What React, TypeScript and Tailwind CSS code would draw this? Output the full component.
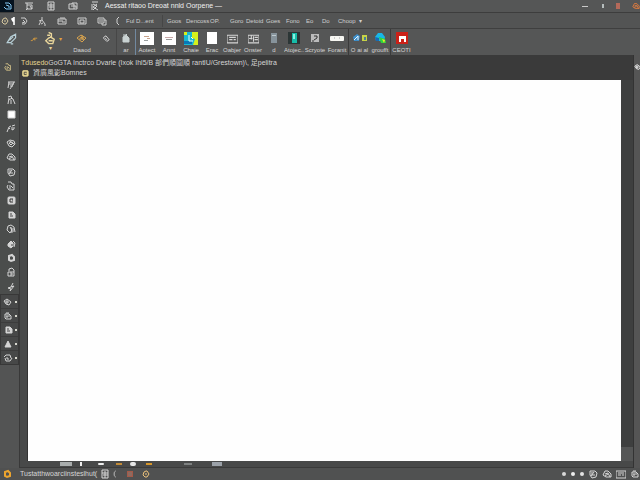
import type { ReactNode } from "react";

/**
 * Desktop image editor: title bar, menu, tool ribbon, document tab,
 * tool palette on the left, blank canvas and a status bar.
 */

const GLYPHS: Record<string, ReactNode> = {
  logo: <path d="M3 2h4l2 2v4H4L2 6M4 4l3 1v2" />,
  frame: <path d="M1 2h8M3 2v6h5V4H3M2 9l2-2M6 5l2 3" />,
  grid: <path d="M2 1v8h6V1zM2 4h6M5 2v7M3 6h5" />,
  card: <path d="M1 3h5v5H1zM4 3V2h5v6H6M3 5h5M7 6h2" />,
  scissors: <path d="M2 1h6M3 3l4 2-4 4M7 3L3 6l5 3M2 3v6" />,
  ring: <path d="M5 2L3 3 2 6l2 2h2l2-3-2-3zM4 5h2" />,
  flag: <path d="M5 1v8M5 2L3 3l1 2h1" strokeWidth="1.6" />,
  rotate: <path d="M2 2h4l2 3-2 3H3M4 4l2 2-3 1" />,
  person: <path d="M5 1v3M2 5l3-1 3 4M4 5L2 9M6 7L4 8M7 9h2" />,
  window: <path d="M1 3h8v5H1zM1 5h5M5 6h3M3 2h5" />,
  folder: <path d="M1 2h8v6H1zM3 4h4v3H3z" />,
  chat: <path d="M1 2h6v5H1zM7 4h2v5H5V7M3 3v3M5 3v3" />,
  paren: <path d="M6 1L4 3v4l2 2" />,
  pen: <path d="M1 8l3-5 4-2v3L4 8H1zM3 6l3-3M4 9h2" />,
  wave: <path d="M1 7h2l2-3h4M5 4v2h2" />,
  key: <path d="M4 1l2 1v2L4 5 2 7l2 2h3l1-3-3-2M3 3h2M4 7h3" />,
  diamond: <path d="M0 5l4-3 5 3-4 4zM3 5l3-1v3M5 2v4M2 6h5" />,
  eraser: <path d="M2 3l3-2 4 5-3 2-4-4zM4 4l2 2" />,
  bag: (
    <>
      <path d="M2 9V4l3-2 3 3v4z" fill="currentColor" />
      <path d="M2 2h3l1-1M4 4h3" />
    </>
  ),
  panel: <path d="M0 2h10v7H0zM2 4h6M2 6h3M6 6h2" />,
  table: <path d="M0 2h10v7H0zM3 2v4M1 5h3M6 4h3M6 6h3M5 3v5" />,
  note: (
    <>
      <path d="M1 1h8v8H1z" fill="#bbb" stroke="none" />
      <path d="M4 3h3v2L4 7M2 8h2" stroke="#333" />
    </>
  ),
  crop: <path d="M2 2h7M3 4h5M3 2L2 8M8 2L6 6l-2 3M4 6h3" />,
  lasso: <path d="M2 2l3-1 1 3M3 3L2 9M5 3l2 1 2 5M5 5v4M3 5l3-2" />,
  square: <path d="M2 2h7v7H2z" fill="#fff" />,
  brush: <path d="M1 9l2-5 2-1M3 5l1 1M6 3l3-1M6 4v3l2-1V4" />,
  eye: <path d="M1 4l3-2 4 1 1 3-3 3-3-1-2-4zM3 4l4 1-2 2-2-2M4 3l4 3" />,
  heal: <path d="M1 6l2-4h3l3 3v3H4L1 6zM3 5l3-1 2 4M3 7l3-2" />,
  clock: <path d="M2 2h5l2 2-1 4-4 1-2-3V2zM4 3v3h3M6 3L3 7" />,
  stamp: <path d="M2 1h3l1 2h2v6H3L1 6l1-2M4 4v4M5 5l2 2" />,
  box: (
    <>
      <rect x="2" y="2" width="7" height="7" rx="1" fill="currentColor" />
      <path d="M4 4h3M4 4v3h3M6 5h1" stroke="#333" />
    </>
  ),
  page: (
    <>
      <path d="M3 2h4l2 2v4H3z" fill="currentColor" />
      <path d="M4 4h2M4 6h3" stroke="#444" />
    </>
  ),
  drop: (
    <>
      <path d="M2 5l3-3 2 2v3L5 9 2 7z" fill="currentColor" />
      <path d="M7 2l2 2-1 4" />
      <path d="M6 5v2" stroke="#444" />
    </>
  ),
  donut: <path d="M3 3l3-1 2 2v3L5 8 3 7z" strokeWidth="2" />,
  fan: <path d="M2 2l3-1 3 2 1 5M2 2L1 6l3 3 2-3-2-3M5 3l1 6M7 4v4" />,
  lock: <path d="M3 4V2l3-1 2 2v6H2V5h6M4 6h2v2H4" />,
  nib: <path d="M7 1L5 5 2 6l3 1-1 2 4-5-3 1" />,
  hand: <path d="M1 4l3-2 4 3-2 3-3-1zM3 4h2v2H3z" />,
  cube: <path d="M2 3h4l2 2v3H3L2 7zM3 5h4M4 5v2M3 2h3" />,
  cone: <path d="M2 8l3-6 3 6zM5 3v5M6 5v3" fill="currentColor" />,
  cycle: <path d="M1 4l2-2h4l1 3M9 5L7 8H3L2 5M4 4v2h2" />,
};

function Glyph({ name, className = "size-2.5" }: { name: string; className?: string }) {
  return (
    <svg
      viewBox="0 0 10 10"
      fill="none"
      stroke="currentColor"
      strokeWidth="1"
      aria-hidden="true"
      className={`shrink-0 ${className}`}
    >
      {GLYPHS[name]}
    </svg>
  );
}

function IconButton({ name, label, className }: { name: string; label: string; className?: string }) {
  return (
    <button aria-label={label} className={`flex shrink-0 items-center justify-center ${className ?? ""}`}>
      <Glyph name={name} />
    </button>
  );
}

const QUICK = ["frame", "grid", "card", "scissors"];

const MENU_ICONS = [
  { name: "ring", cls: "w-2.5 text-[#d8c9a0]" },
  { name: "flag", cls: "w-2 text-white" },
  { name: "rotate", cls: "w-3" },
  { name: "person", cls: "w-6" },
  { name: "window", cls: "w-4" },
  { name: "folder", cls: "w-6" },
  { name: "chat", cls: "w-4" },
  { name: "paren", cls: "w-4" },
];

const MENUS = [
  { label: "Ful D...ent", cls: "w-9" },
  { label: "Goos", cls: "w-6 border-l border-[#464646] pl-1" },
  { label: "Dencoss", cls: "w-6" },
  { label: "OP.", cls: "w-5" },
  { label: "Goro", cls: "w-4" },
  { label: "Detoid", cls: "w-5" },
  { label: "Goes", cls: "w-5" },
  { label: "Fono", cls: "w-5" },
  { label: "Eo", cls: "w-4" },
  { label: "Do", cls: "w-4" },
  { label: "Choop  ▾", cls: "w-8" },
];

const RIBBON: { label: string; icon: ReactNode; cls: string }[] = [
  {
    label: "Aotect",
    cls: "w-[22px]",
    icon: (
      <svg viewBox="0 0 14 13" className="h-[13px] w-3.5">
        <path fill="#fff" d="M0 0h14v13H0z" />
        <path stroke="#c9a48c" d="M4 4.500h5M7 6.500h3" />
        <path stroke="#9aa0a0" d="M4 8.500h4" />
      </svg>
    ),
  },
  {
    label: "Annt",
    cls: "w-[22px]",
    icon: (
      <svg viewBox="0 0 14 13" className="h-[13px] w-3.5">
        <path fill="#fff" d="M0 0h14v13H0z" />
        <path stroke="#c8a8a8" d="M3 5.500h8" />
        <path stroke="#999" d="M4 7.500h6" />
      </svg>
    ),
  },
  {
    label: "Chaie",
    cls: "w-[22px]",
    icon: (
      <svg viewBox="0 0 14 13" className="h-[13px] w-3.5">
        <path fill="#17b9d4" d="M0 0h14v13H0z" />
        <path fill="#d6f01c" d="M8 0h6v13H9l2-6-3-1zM0 0h3v3H0z" />
        <path fill="#0878b8" d="M0 9h8v3H0z" />
        <path fill="none" stroke="#eaffff" d="M5 3v6h4M7 5l2 2" />
      </svg>
    ),
  },
  { label: "Erac", cls: "w-5", icon: <span className="h-3 w-2.5 bg-white" /> },
  { label: "Oabjer", cls: "w-5", icon: <Glyph name="panel" className="size-[11px]" /> },
  { label: "Onster", cls: "w-[22px]", icon: <Glyph name="table" className="size-[11px]" /> },
  {
    label: "d",
    cls: "w-5",
    icon: (
      <svg viewBox="0 0 6 10" className="h-2.5 w-1.5">
        <path fill="#87939b" d="M0 0h6v10H0z" />
        <path stroke="#bdc8cd" d="M1 2.500h4" />
      </svg>
    ),
  },
  {
    label: "Atojec..",
    cls: "w-5",
    icon: (
      <svg viewBox="0 0 12 12" className="size-3">
        <path fill="#2c3636" d="M0 0h12v12H0z" />
        <path fill="#16bca9" d="M4 1h5v10H4z" />
        <path fill="#8af0df" d="M5 2h2v5H5z" />
      </svg>
    ),
  },
  { label: "Scryote", cls: "w-[22px]", icon: <Glyph name="note" /> },
  {
    label: "Foranit",
    cls: "w-[22px]",
    icon: (
      <svg viewBox="0 0 14 6" className="h-1.5 w-3.5">
        <rect width="14" height="5" y="1" rx="1" fill="#f6f6f2" />
        <path stroke="#ccc" d="M4.500 2v2M9.500 2v2" />
      </svg>
    ),
  },
  {
    label: "O ai al",
    cls: "w-[22px] border-l border-[#3b3b3b]",
    icon: (
      <svg viewBox="0 0 14 8" className="h-2 w-3.5">
        <path fill="#3e8ec8" d="M0 3l4-3 3 2-1 5H1z" />
        <path fill="none" stroke="#e3f3ff" d="M1 6l4-4v4" />
        <path fill="#c7d246" d="M9 1h5v6H9z" />
        <path fill="#477f9a" d="M11 3h2v3h-2z" />
      </svg>
    ),
  },
  {
    label: "groufft",
    cls: "w-5",
    icon: (
      <svg viewBox="0 0 12 12" className="size-3">
        <path fill="#17b7e8" d="M1 5l3-4h4l3 4-1 4H2z" />
        <path fill="#2fd53c" d="M5 5l6 2 1 4H7z" />
        <path fill="#e8ec27" d="M8 7l3 1-1 3z" />
        <path fill="#1769b3" d="M1 5l4 1v3H2z" />
      </svg>
    ),
  },
  {
    label: "CEOTI",
    cls: "w-[22px] border-l border-[#3b3b3b]",
    icon: (
      <svg viewBox="0 0 12 12" className="size-3">
        <path fill="#ca2118" d="M0 0h12v12H0z" />
        <path fill="#fff" d="M3 4h7v6H8V7H5v3H3z" />
      </svg>
    ),
  },
];

const TOOLS = [
  "crop", "lasso", "square", "brush", "eye", "heal", "clock", "stamp",
  "box", "page", "fan", "drop", "donut", "lock", "nib",
];
const LAYER_TOOLS = ["hand", "cube", "page", "cone", "cycle"];

function TitleBar() {
  return (
    <header className="flex h-[13px] items-center border-b border-[#3d3d3d] bg-[#555656]">
      <span className="mr-2.5 flex h-3 w-3.5 items-center justify-center bg-[#06131f] text-[#83c9f5]">
        <Glyph name="logo" />
      </span>
      <div className="flex w-[81px] gap-3 text-[#d2d2d2]">
        {QUICK.map((name) => (
          <IconButton key={name} name={name} label={name} />
        ))}
      </div>
      <h1 className="text-[7px] leading-3 text-[#f0f0f0]">Aessat ritaoo Dreoat nnld Oorpene —</h1>
      <div className="ml-auto flex items-center gap-2">
        <button aria-label="Minimize" className="flex size-2.5 items-center justify-center">
          <span className="h-px w-1.5 bg-[#c9c9c9]" />
        </button>
        <button aria-label="Restore" className="flex size-2.5 items-center justify-center">
          <span className="h-1 w-0.5 bg-[#b5bcbc]" />
        </button>
        <button aria-label="Close" className="h-1.5 w-1 bg-[#b4695a]" />
        <button aria-label="Account" className="ml-1 w-2 text-[#f0803c]">
          <Glyph name="heal" className="size-2" />
        </button>
      </div>
    </header>
  );
}

function MenuBar() {
  return (
    <nav className="flex h-4 items-center border-b border-[#3f3f3f] bg-[#535454] text-[#cfcfcf]">
      {MENU_ICONS.map(({ name, cls }) => (
        <IconButton key={name} name={name} label={name} className={cls} />
      ))}
      {MENUS.map(({ label, cls }) => (
        <button key={label} className={`shrink-0 whitespace-pre text-left text-[6px] leading-3 ${cls}`}>
          {label}
        </button>
      ))}
    </nav>
  );
}

function Ribbon() {
  return (
    <div className="flex h-[26px] bg-[#555656] text-[6px] leading-[7px] text-[#d5d5d5]">
      <button aria-label="Pen" className="flex h-5 w-6 items-center justify-center text-[#b8d0d8]">
        <Glyph name="pen" className="size-3" />
      </button>
      <button aria-label="Smudge" className="flex h-5 w-5 items-center justify-center text-[#e2a33c]">
        <Glyph name="wave" className="size-2" />
      </button>
      <button aria-label="Key" className="flex w-3 flex-col items-center text-[#e8d59b]">
        <Glyph name="key" className="mt-0.5 size-3.5" />
        <span>▾</span>
      </button>
      <span className="flex h-5 w-2 items-center justify-center text-[#e2a33c]">▾</span>
      <button className="flex w-9 flex-col items-center">
        <span className="flex h-[18px] items-center text-[#d8a34f]">
          <Glyph name="diamond" />
        </span>
        Daaod
      </button>
      <button aria-label="Eraser" className="flex h-5 w-3 items-center justify-center text-[#eee]">
        <Glyph name="eraser" className="size-2" />
      </button>
      <button className="ml-1 flex w-[19px] flex-col items-center border-l border-[#474747]">
        <span className="flex h-[18px] items-center text-[#c9d2d2]">
          <Glyph name="bag" />
        </span>
        ar
      </button>
      <span className="w-px bg-[#7189a0]" />
      {RIBBON.map(({ label, icon, cls }) => (
        <button key={label} className={`flex shrink-0 flex-col items-center overflow-hidden ${cls}`}>
          <span className="flex h-[18px] items-center">{icon}</span>
          {label}
        </button>
      ))}
    </div>
  );
}

function ToolPalette() {
  return (
    <aside className="w-5 shrink-0 border-r border-[#393939] bg-[#535454] text-[#d4d4d4]">
      <div className="bg-[#4b4d4c]">
        <button aria-label="Home" className="flex h-[23px] w-4 items-center justify-center text-[#e8d493]">
          <Glyph name="stamp" className="size-2" />
        </button>
        <div className="flex h-[216px] flex-col pl-0.5">
          {TOOLS.map((name, i) => (
            <IconButton key={name} name={name} label={`Tool ${i + 1}`} className="flex-1" />
          ))}
        </div>
      </div>
      <div className="flex h-[71px] flex-col border border-[#383838] bg-[#474848]">
        {LAYER_TOOLS.map((name) => (
          <button
            key={name}
            aria-label={name}
            className="flex flex-1 items-center gap-0.5 border-b border-[#3c3c3c] pl-0.5 last:border-b-0"
          >
            <Glyph name={name} />
            <span className="h-0.5 w-0.5 bg-[#d8d8cf]" />
          </button>
        ))}
      </div>
    </aside>
  );
}

function Workspace() {
  return (
    <main className="flex min-w-0 flex-1 flex-col bg-[#3a3a3a]">
      <div className="h-[25px] overflow-hidden whitespace-pre pt-0.5 pl-px text-[#d5d5d5]">
        <p className="text-[7px] leading-[11px]">
          <span className="text-[#e6d591]">Tdusedo</span>
          {"GoGTA Inctrco Dvarle (Ixok Ihl5/B 部們順圖順 rantlU/Grestown)\\, 足pelitra"}
        </p>
        <p className="flex items-center gap-1 text-[7px] leading-[10px]">
          <span className="text-[#e6d591]">
            <Glyph name="box" className="size-2" />
          </span>
          資廣風影Bomnes
        </p>
      </div>
      <div className="flex flex-1">
        <div className="w-2 border-r border-[#333] bg-[#484949]" />
        <div className="flex-1 bg-[#fefefe]" />
        <div className="flex w-3 flex-col justify-end bg-[#3e3f3f]">
          <span className="h-3.5 bg-[#555656]" />
        </div>
      </div>
      <div className="flex h-[7px] items-center border-b border-[#3a3a3a] bg-[#484949] pl-10">
        <span className="h-1 w-3 bg-[#a9adad]" />
        <span className="ml-2 h-1 w-0.5 bg-[#eee]" />
        <span className="ml-4 h-0.5 w-1.5 rounded-full bg-[#eee]" />
        <span className="ml-3 h-0.5 w-1.5 bg-[#c28b38]" />
        <span className="ml-2 h-1 w-1.5 rounded-full bg-[#e6e6e6]" />
        <span className="ml-2.5 h-0.5 w-1.5 bg-[#d6962b]" />
        <span className="ml-8 h-0.5 w-2 bg-[#7d8080]" />
        <span className="ml-5 h-1 w-2.5 bg-[#9ba1a8]" />
      </div>
    </main>
  );
}

function StatusBar() {
  return (
    <footer className="flex h-3 items-center bg-[#505151] text-[#d6d6d6]">
      <span className="ml-0.5 w-[18px] text-[#eda52f]">
        <Glyph name="donut" />
      </span>
      <p className="w-20 whitespace-nowrap text-[7px] leading-3">Tustatthwoarciinsteslhut(</p>
      <Glyph name="grid" />
      <Glyph name="paren" className="ml-px size-2" />
      <span className="ml-2 size-1.5 border border-[#a45a48] bg-[#8e6a60]" />
      <span className="ml-2 text-[#edc27a]">
        <Glyph name="ring" />
      </span>
      <div className="ml-auto flex items-center gap-1">
        <span className="mr-px size-1 rounded-full bg-[#d8d8d8]" />
        <span className="mr-px size-1 rounded-full bg-[#eee]" />
        <span className="size-1 rounded-full bg-[#e3e3e3]" />
        <IconButton name="clock" label="History" />
        <IconButton name="heal" label="Sync" />
        <IconButton name="panel" label="Panels" />
        <IconButton name="cube" label="More" />
      </div>
    </footer>
  );
}

export default function App() {
  return (
    <div className="flex h-screen flex-col overflow-hidden bg-[#4b4c4c] font-['Liberation_Sans','Noto_Sans_CJK_TC',sans-serif]">
      <TitleBar />
      <MenuBar />
      <Ribbon />
      <div className="flex min-h-0 flex-1">
        <ToolPalette />
        <Workspace />
        <aside className="w-[7px] shrink-0 overflow-hidden border-l border-[#333] bg-[#555] pt-2 text-white">
          <Glyph name="hand" className="size-2" />
        </aside>
      </div>
      <StatusBar />
    </div>
  );
}
